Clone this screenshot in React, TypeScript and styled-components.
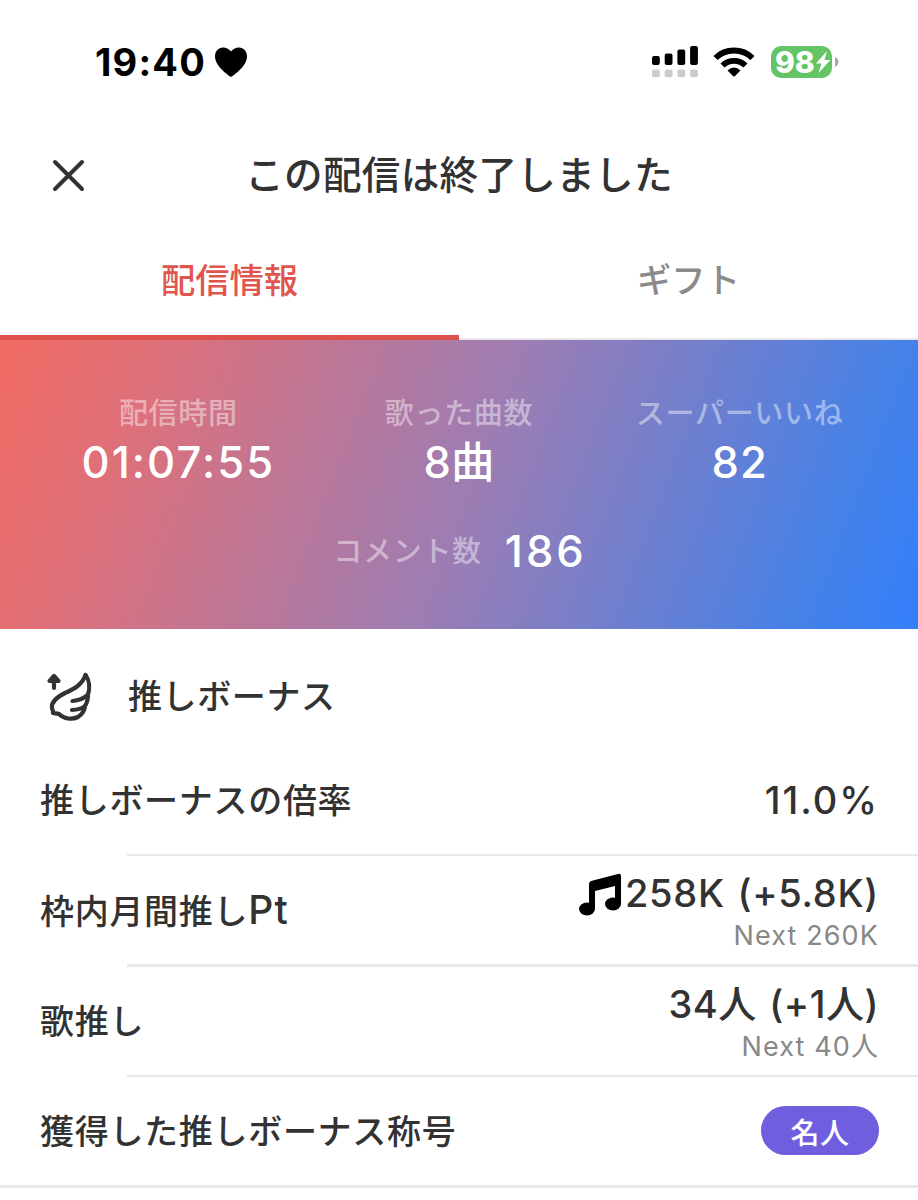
import React from "react";
import styled, { createGlobalStyle } from "styled-components";

const GlobalStyle = createGlobalStyle`
  * { box-sizing: border-box; }
  body {
    margin: 0;
    background: #fff;
    color: #323232;
    font-family: Inter, "Noto Sans CJK JP", sans-serif;
    font-weight: 500;
    white-space: nowrap;
  }
`;

const Screen = styled.main`
  display: flex;
  flex-direction: column;
  height: 1200px;
  width: 918px;
  overflow: hidden;
  background: #fff;
`;

const StatusBar = styled.header`
  display: flex;
  align-items: center;
  justify-content: space-between;
  height: 124px;
  padding: 0 79px 0 95px;
  color: #000;
`;

const Clock = styled.div`
  display: flex;
  align-items: center;
  gap: 8px;
  font-size: 38px;
  font-weight: 700;
  line-height: 40px;
  letter-spacing: 1.2px;
`;

const StatusIcons = styled.div`
  display: flex;
  align-items: center;
`;

const SignalIcon = styled.svg`
  margin-right: 14px;
`;

const WifiIcon = styled.svg`
  margin-right: 16px;
`;

const Battery = styled.div`
  display: flex;
  align-items: center;
  gap: 3px;
`;

const BatteryBody = styled.div`
  display: flex;
  align-items: center;
  width: 61px;
  height: 32px;
  padding-left: 4px;
  border-radius: 10px;
  background: #65c466;
  color: #fff;
  font-size: 30px;
  font-weight: 800;
  line-height: 32px;
`;

const NavBar = styled.div`
  display: grid;
  grid-template-columns: 136px 1fr 136px;
  align-items: center;
  height: 102px;
`;

const CloseButton = styled.button`
  display: flex;
  width: 34px;
  height: 34px;
  margin-left: 51px;
  padding: 0;
  border: 0;
  background: none;
`;

const Title = styled.h1`
  margin: 0 0 1px;
  font-size: 38.6px;
  font-weight: 500;
  line-height: 56px;
  letter-spacing: 0.3px;
  text-align: center;
`;

const Tabs = styled.nav`
  display: grid;
  grid-template-columns: 459px 1fr;
  height: 114px;
`;

const Tab = styled.div<{ $active?: boolean }>`
  display: flex;
  align-items: center;
  justify-content: center;
  padding-bottom: ${(p) => (p.$active ? 5 : 8)}px;
  border-bottom: ${(p) => (p.$active ? "5px solid #dc524b" : "2px solid #e9e9ec")};
  color: ${(p) => (p.$active ? "#e0554e" : "#8a8a8a")};
  font-size: 34.3px;
  font-weight: 500;
`;

const Summary = styled.section`
  display: flex;
  flex-direction: column;
  height: 289px;
  padding: 54px 38px 0;
  background: linear-gradient(111deg, #f16b63 0%, #df7079 15%, #9b7db4 52%, #4581e7 88%, #347ffc 100%);
  color: #fff;
`;

const StatGrid = styled.div`
  display: grid;
  grid-template-columns: repeat(3, 1fr);
  height: 129px;
`;

const Stat = styled.div`
  display: flex;
  flex-direction: column;
  align-items: center;
`;

const CommentStat = styled.div`
  display: flex;
  align-items: center;
  justify-content: center;
  gap: 23px;
  padding-left: 2px;
`;

const StatLabel = styled.span`
  color: rgba(255, 255, 255, 0.45);
  font-size: 29px;
  line-height: 40px;
  letter-spacing: 0.7px;
`;

const StatValue = styled.span<{ $spacing?: number }>`
  font-size: 43.5px;
  line-height: 57px;
  letter-spacing: ${(p) => p.$spacing ?? 0.6}px;
  font-feature-settings: "calt" 0;
`;

const SectionHeader = styled.div`
  display: flex;
  align-items: center;
  gap: 33px;
  height: 117px;
  padding: 19px 0 0 45px;
`;

const SectionTitle = styled.h2`
  margin: 0;
  font-size: 34px;
  font-weight: 500;
  line-height: 50px;
  letter-spacing: 0.6px;
`;

const List = styled.div`
  display: flex;
  flex-direction: column;
`;

const Row = styled.div`
  display: flex;
  align-items: center;
  justify-content: space-between;
  height: 108px;
  padding: 2px 39px 0 40px;
`;

const Divider = styled.div<{ $inset: number }>`
  height: 2.4px;
  margin-left: ${(p) => p.$inset}px;
  background: #e9e9e9;
`;

const RowLabel = styled.span`
  font-size: 34px;
  line-height: 50px;
  letter-spacing: 0.7px;
`;

const Unit = styled.span`
  font-size: 39px;
  letter-spacing: 1.2px;
`;

const RowValues = styled.div`
  display: flex;
  flex-direction: column;
  align-items: flex-end;
  padding-top: 2px;
`;

const RowValue = styled.span<{ $spacing: number; $lift?: number }>`
  display: flex;
  align-items: center;
  margin-bottom: ${(p) => p.$lift ?? 0}px;
  font-size: 38px;
  line-height: 48px;
  letter-spacing: ${(p) => p.$spacing}px;
  word-spacing: 2px;
  font-feature-settings: "calt" 0;
`;

const NextValue = styled.span`
  color: #888;
  font-size: 27px;
  font-weight: 400;
  line-height: 38px;
  letter-spacing: 1.1px;
`;

const Badge = styled.span`
  display: flex;
  align-items: center;
  justify-content: center;
  width: 118px;
  height: 49px;
  margin-bottom: 3px;
  border-radius: 25px;
  background: #6f5fdf;
  color: #fff;
  font-size: 29px;
  letter-spacing: 0.5px;
`;

const Heart = () => (
  <svg width="34" height="32" viewBox="0 0 34 32">
    <path d="M17 31C14 29 1 20 1 10.500C1 5 4.500 1.500 9 1.500C12.500 1.500 15.500 3.200 17 5.500C18.500 3.200 21.500 1.500 25 1.500C29.500 1.500 33 5 33 10.500C33 20 20 29 17 31Z" fill="#000" />
  </svg>
);

const Signal = () => (
  <SignalIcon width="48" height="34" viewBox="0 0 48 34">
    {[9, 11.5, 15.5, 19].map((h, i) => (
      <g key={i}>
        <rect x={1 + i * 12.7} y={20 - h} width="7.800" height={h} rx="2" fill="#000" />
        <rect x={1 + i * 12.7} y="24.500" width="7.800" height="7.800" rx="2" fill="#ccc" />
      </g>
    ))}
  </SignalIcon>
);

const Wifi = () => (
  <WifiIcon width="42" height="32" viewBox="0 0 42 32">
    <g fill="none" stroke="#000" strokeWidth="5.800">
      <path d="M2.500 12C12.500 2 29.500 2 39.500 12" />
      <path d="M9.500 19.500C16 13.300 26 13.300 32.500 19.500" />
    </g>
    <path d="M14.500 24.500Q21 18.600 27.500 24.500L22 30Q21 31 20 30Z" fill="#000" />
  </WifiIcon>
);

const Bolt = () => (
  <svg width="16" height="24" viewBox="0 0 16 24">
    <path d="M12 1L1 13.500H6.500L3.500 23L15.500 10H9.500Z" fill="#fff" />
  </svg>
);

const Wing = () => (
  <svg width="50" height="52" viewBox="0 0 50 52" fill="none" stroke="#323232" strokeWidth="4.200" strokeLinecap="round" strokeLinejoin="round">
    <path d="M9 17V7M4.500 10L9 5L13.500 10Z" />
    <path d="M40.500 4C37 14 29 18 20 22C12 26 6 31 7 37C7.300 39 8.300 39.500 8 42C10 42.500 12 42 14 43C19 48 27 49 33 46C37 43.500 39.500 40 40 35C37 37.500 33 38.800 27 39" />
    <path d="M40 35C42 32 43 28 43 23.500C39 27.500 34 29.500 27.500 30M43 23.500C45 17 44.500 9 40.500 4" />
  </svg>
);

const NoteIcon = styled.svg`
  margin: 4px 3px 0 0;
`;

const Note = () => (
  <NoteIcon width="44" height="44" viewBox="0 0 44 44" fill="#000">
    <path d="M11 11Q11 9 13 8L40 1Q43 0 43 3V30H37V13L17 18V34H11Z" />
    <ellipse cx="9" cy="36" rx="8" ry="6.500" />
    <ellipse cx="35" cy="31" rx="8" ry="6.500" />
  </NoteIcon>
);

const stats = [
  { label: "配信時間", value: "01:07:55", spacing: 2.1 },
  { label: "歌った曲数", value: "8曲", spacing: 0 },
  { label: "スーパーいいね", value: "82", spacing: 1 },
];

export default function App() {
  return (
    <Screen>
      <GlobalStyle />
      <StatusBar>
        <Clock>
          19:40
          <Heart />
        </Clock>
        <StatusIcons>
          <Signal />
          <Wifi />
          <Battery>
            <BatteryBody>
              98
              <Bolt />
            </BatteryBody>
            <svg width="4" height="10" viewBox="0 0 4 10">
              <path d="M0 0Q3.500 2 3.500 5T0 10Z" fill="#aaa" />
            </svg>
          </Battery>
        </StatusIcons>
      </StatusBar>
      <NavBar>
        <CloseButton aria-label="閉じる">
          <svg width="34" height="34" viewBox="0 0 34 34" stroke="#323232" strokeWidth="4" strokeLinecap="round">
            <path d="M4 4L31 31M31 4L4 31" />
          </svg>
        </CloseButton>
        <Title>この配信は終了しました</Title>
      </NavBar>
      <Tabs>
        <Tab $active>配信情報</Tab>
        <Tab>ギフト</Tab>
      </Tabs>
      <Summary>
        <StatGrid>
          {stats.map((s) => (
            <Stat key={s.label}>
              <StatLabel>{s.label}</StatLabel>
              <StatValue $spacing={s.spacing}>{s.value}</StatValue>
            </Stat>
          ))}
        </StatGrid>
        <CommentStat>
          <StatLabel>コメント数</StatLabel>
          <StatValue $spacing={3}>186</StatValue>
        </CommentStat>
      </Summary>
      <SectionHeader>
        <Wing />
        <SectionTitle>推しボーナス</SectionTitle>
      </SectionHeader>
      <List>
        <Row>
          <RowLabel>推しボーナスの倍率</RowLabel>
          <RowValue $spacing={2} $lift={3}>11.0%</RowValue>
        </Row>
        <Divider $inset={127} />
        <Row>
          <RowLabel>
            枠内月間推し<Unit>Pt</Unit>
          </RowLabel>
          <RowValues>
            <RowValue $spacing={0.7}>
              <Note />
              258K (+5.8K)
            </RowValue>
            <NextValue>Next 260K</NextValue>
          </RowValues>
        </Row>
        <Divider $inset={127} />
        <Row>
          <RowLabel>歌推し</RowLabel>
          <RowValues>
            <RowValue $spacing={0.5}>34人 (+1人)</RowValue>
            <NextValue>Next 40人</NextValue>
          </RowValues>
        </Row>
        <Divider $inset={127} />
        <Row>
          <RowLabel>獲得した推しボーナス称号</RowLabel>
          <Badge>名人</Badge>
        </Row>
        <Divider $inset={0} />
      </List>
    </Screen>
  );
}
